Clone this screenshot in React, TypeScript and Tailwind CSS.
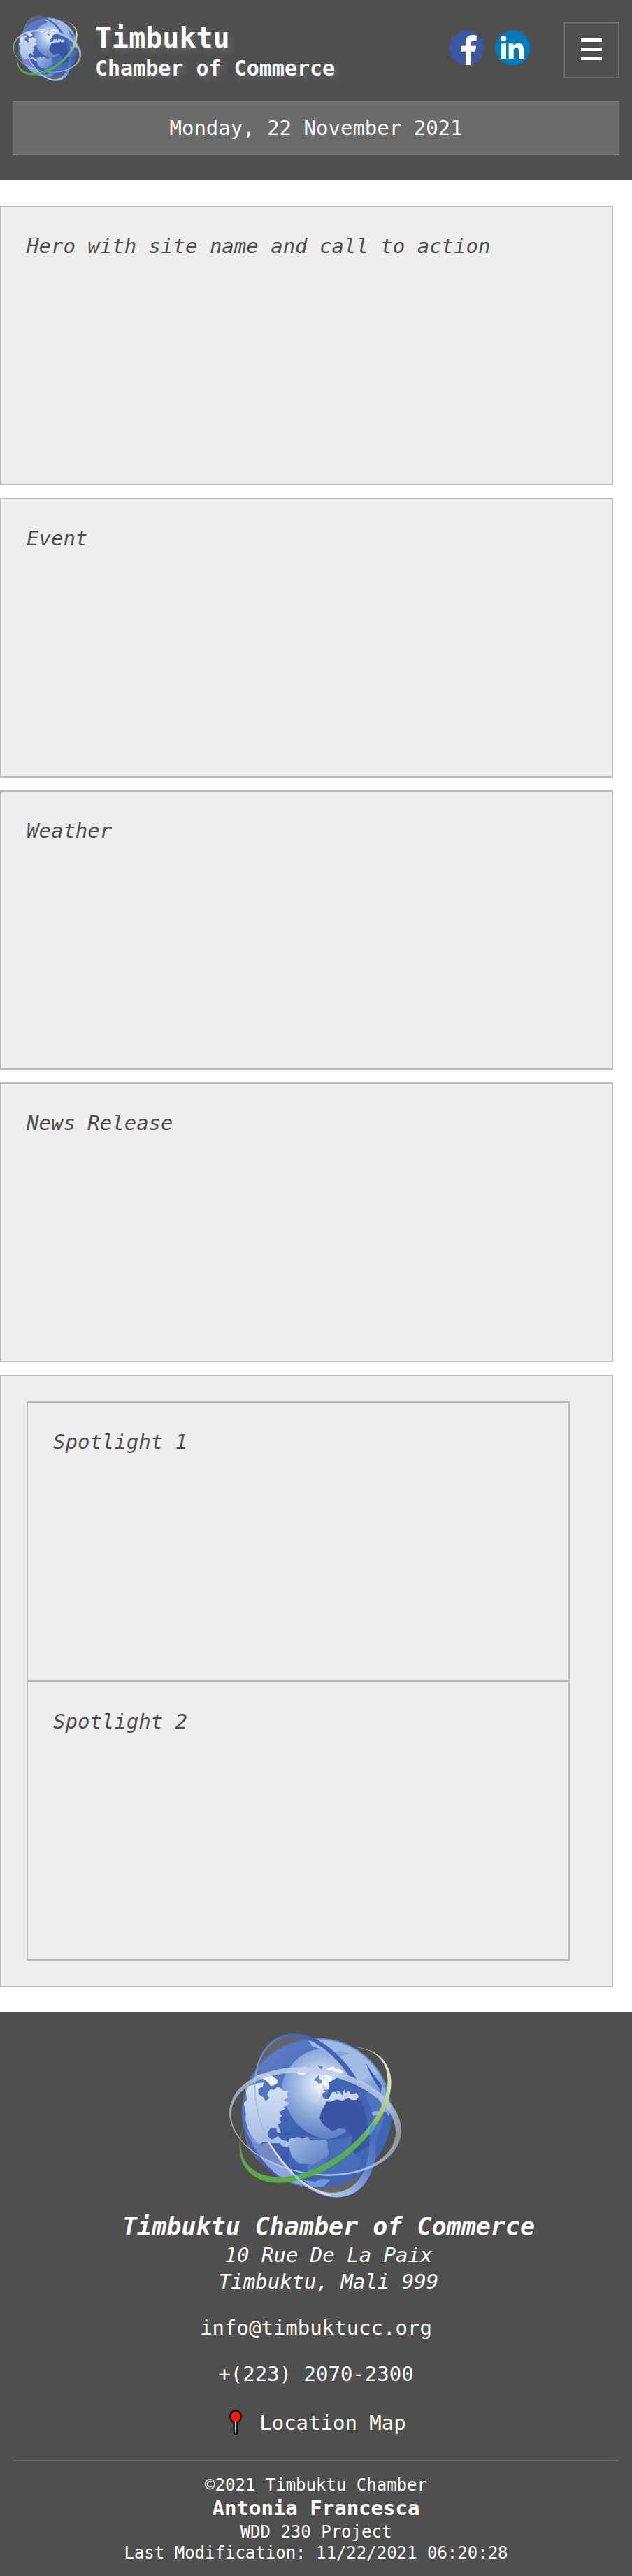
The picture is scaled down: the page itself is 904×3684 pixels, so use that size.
import { useId, useState } from "react";

function Globe({ className }: { className: string }) {
  const id = useId().replace(/[^a-zA-Z0-9]/g, "");
  const ref = (name: string) => `url(#${id}${name})`;
  return (
    <svg className={className} viewBox="78 48 756 756" role="img" aria-label="Globe logo">
      <defs>
        <linearGradient id={`${id}base`} x1="200" y1="130" x2="700" y2="700" gradientUnits="userSpaceOnUse">
          <stop offset="0" stopColor="#6482c8" />
          <stop offset="0.35" stopColor="#4a6cbc" />
          <stop offset="0.6" stopColor="#3b5aab" />
          <stop offset="1" stopColor="#4468b8" />
        </linearGradient>
        <radialGradient id={`${id}glow`} cx="480" cy="300" r="225" gradientUnits="userSpaceOnUse">
          <stop offset="0" stopColor="#ffffff" />
          <stop offset="0.2" stopColor="#d5e0f3" />
          <stop offset="0.5" stopColor="#9db8e2" />
          <stop offset="1" stopColor="#7394d2" stopOpacity="0.7" />
        </radialGradient>
        <linearGradient id={`${id}asia`} x1="560" y1="120" x2="720" y2="370" gradientUnits="userSpaceOnUse">
          <stop offset="0" stopColor="#9db9e4" />
          <stop offset="0.6" stopColor="#a3bde3" />
          <stop offset="1" stopColor="#5f86ca" />
        </linearGradient>
        <linearGradient id={`${id}america`} x1="250" y1="270" x2="240" y2="560" gradientUnits="userSpaceOnUse">
          <stop offset="0" stopColor="#dbe7f7" />
          <stop offset="1" stopColor="#a5bbe2" />
        </linearGradient>
        <linearGradient id={`${id}south`} x1="370" y1="530" x2="500" y2="680" gradientUnits="userSpaceOnUse">
          <stop offset="0" stopColor="#9ab4e0" />
          <stop offset="1" stopColor="#5579c2" />
        </linearGradient>
        <linearGradient id={`${id}ringA`} x1="90" y1="400" x2="822" y2="490" gradientUnits="userSpaceOnUse">
          <stop offset="0" stopColor="#a8b6bc" />
          <stop offset="0.25" stopColor="#c0d4ee" />
          <stop offset="0.6" stopColor="#bccdec" />
          <stop offset="0.88" stopColor="#b4c5e4" />
          <stop offset="1" stopColor="#98a5ab" />
        </linearGradient>
        <linearGradient id={`${id}ringB`} x1="180" y1="650" x2="770" y2="230" gradientUnits="userSpaceOnUse">
          <stop offset="0" stopColor="#5ba745" />
          <stop offset="0.4" stopColor="#58b058" />
          <stop offset="0.58" stopColor="#a0c257" />
          <stop offset="0.78" stopColor="#dbe4b4" />
          <stop offset="1" stopColor="#e0e1d4" />
        </linearGradient>
        <linearGradient id={`${id}ringC`} x1="350" y1="85" x2="560" y2="787" gradientUnits="userSpaceOnUse">
          <stop offset="0" stopColor="#3f5dad" />
          <stop offset="0.28" stopColor="#4764b5" />
          <stop offset="0.48" stopColor="#5f85cd" />
          <stop offset="0.65" stopColor="#9fb8e6" />
          <stop offset="0.9" stopColor="#a9bbe0" />
          <stop offset="1" stopColor="#dfe2ea" />
        </linearGradient>
        <clipPath id={`${id}ball`}>
          <circle cx="459" cy="425" r="322" />
        </clipPath>
        <mask id={`${id}maskA`}>
          <rect x="0" y="0" width="900" height="900" fill="#fff" />
          <ellipse cx="445" cy="470" rx="356" ry="213" transform="rotate(9.4 445 470)" fill="#000" />
        </mask>
        <mask id={`${id}maskB`}>
          <rect x="0" y="0" width="900" height="900" fill="#fff" />
          <ellipse cx="448" cy="421" rx="364" ry="212" transform="rotate(-37.8 448 421)" fill="#000" />
        </mask>
        <mask id={`${id}maskC`}>
          <rect x="0" y="0" width="900" height="900" fill="#fff" />
          <ellipse cx="441" cy="433" rx="353" ry="217" transform="rotate(66 441 433)" fill="#000" />
        </mask>
      </defs>

      <ellipse cx="453" cy="436" rx="370" ry="229" transform="rotate(65.1 453 436)" fill="#fff" opacity="0.12" />
      <path d="M150 500Q150 620 310 696Q230 640 150 500Z" fill="#fff" opacity="0.22" />

      <circle cx="459" cy="425" r="322" fill={ref("base")} />
      <g clipPath={ref("ball")}>
        <path d="M338 238Q390 150 500 150L600 180L680 280L650 360Q640 520 500 538Q340 510 310 320Q312 270 338 238Z" fill={ref("glow")} />
        <path d="M420 108Q560 90 680 180Q780 280 790 400L755 370L742 320L733 300Q700 260 670 210Q690 270 728 320L745 375L700 360L630 300L600 270L575 250L530 200L500 160L440 140Z" fill={ref("asia")} />
        <path d="M540 165L560 158L600 170L560 182L540 200Z" fill="#86a5da" />
        <path d="M440 108Q560 105 640 150Q735 215 770 330" fill="none" stroke="#8fafe0" strokeWidth="10" opacity="0.6" />

        <path d="M510 295L545 275L600 268L690 320L745 380L770 430L765 550Q730 650 650 700Q560 740 470 715L420 680L340 650L340 560L390 530L440 535Q560 550 610 520L600 500L550 490L472 450L500 380L485 345L510 325Z" fill="#3f66b5" />
        <path d="M510 374Q474 410 472 450Q485 485 530 503Q565 485 583 492Q588 512 611 522Q615 560 590 580Q608 590 622 603L690 560Q705 440 652 372L600 366L545 362Z" fill="#3a55a7" />
        <path d="M370 515Q440 545 500 539Q570 545 611 524Q610 560 590 577Q620 590 630 610Q658 630 646 650Q600 700 495 700L500 540Z" fill="#486eb9" />
        <path d="M648 372Q705 430 695 560L740 490L755 380L690 320Z" fill="#5279bf" opacity="0.7" />
        <path d="M740 308L752 320L758 350L778 390L770 440L740 400L728 360Z" fill="#95b5e5" opacity="0.8" />
        <path d="M694 425Q710 412 730 420L750 405L760 420Q735 420 720 432L703 438Z" fill="#8bb0e5" />

        <path d="M462 220L486 225L485 240L494 247L506 233L530 225L540 238L558 235L576 252L552 260L545 270L527 268L522 290L512 292L505 275L490 262L474 242Z" fill="#f4f8fe" />
        <path d="M462 220L486 225L483 238L490 246L476 242ZM458 272L468 262L470 278L480 284L481 298L465 299L462 290L446 286Z" fill="#6889c9" />
        <path d="M485 300L482 320L497 333L483 342L485 366L510 365L520 345L526 336L540 335L550 346L545 330L560 335L568 350L577 324L584 340L597 331L605 344L630 340L640 354L628 370L607 369L595 360L570 372L545 367L515 377L490 374L500 355L511 334L503 320Z" fill="#c9d9f1" />
        <path d="M485 328L511 325L522 330L516 350L488 366L482 343L498 334Z" fill="#3c61b0" opacity="0.85" />
        <path d="M370 252Q382 232 410 227L427 238Q418 256 395 264Q382 262 370 252Z" fill="#f1f6fe" />

        <path d="M198 270Q215 255 255 258L290 282L292 296L278 305L262 310L249 292L230 280Z" fill="#eef5fe" />
        <path d="M152 315L178 306L206 298L232 294L228 312L208 322L210 346L230 358L240 374L256 362L246 344L260 324L276 326L292 312L307 320L315 330L337 332L330 345L337 357L317 372L341 382L328 397L314 399L325 406L298 422L310 437L298 451L307 466L292 475L299 493L306 512L290 510L286 491L262 490L250 508L252 526L264 540L280 533L292 525L300 532L310 541L327 545L340 551L338 571L314 569L298 555L270 556L252 550L232 549L212 560L188 547L178 528L163 493L154 456L155 428L145 382L160 370Z" fill={ref("america")} />
        <path d="M302 515L325 512L346 516L330 521ZM321 457L331 447L336 459L326 464Z" fill="#3857ab" />
        <path d="M337 545Q342 530 365 534L375 528Q388 528 397 537Q415 524 425 531L430 544L460 543Q475 545 482 539L500 540Q508 555 505 576Q516 592 506 607L495 632L475 642L445 648L420 680L420 645L384 643Q350 620 345 590Z" fill={ref("south")} />
        <path d="M420 645L445 648L500 610L495 680L470 690L415 690Z" fill="#5277c1" />
        <path d="M152 490Q200 620 300 700Q350 740 420 745L370 700Q290 620 254 552L212 560Z" fill="#8492ca" opacity="0.8" />
        <path d="M215 610L330 660L400 740Q280 710 215 610Z" fill="#8fa8dc" />
        <path d="M400 712L450 720L480 708L520 710L490 740L440 745Z" fill="#6f98d7" />
      </g>
      <circle cx="459" cy="425" r="319" fill="none" stroke="#3f62b6" strokeWidth="5" opacity="0.6" />

      <g mask={ref("maskC")}>
        <ellipse cx="453" cy="436" rx="372" ry="231" transform="rotate(65.1 453 436)" fill={ref("ringC")} />
      </g>
      <path d="M254 552Q310 640 366 694Q430 755 520 779" fill="none" stroke="#d9dff2" strokeWidth="7" />
      <g mask={ref("maskA")} opacity="0.85">
        <ellipse cx="453" cy="462" rx="372" ry="228" transform="rotate(9.4 453 462)" fill={ref("ringA")} />
      </g>
      <g mask={ref("maskB")}>
        <ellipse cx="453" cy="434" rx="376" ry="222" transform="rotate(-38.3 453 434)" fill={ref("ringB")} />
      </g>
      <path d="M684 498L707 463L708 494L686 522Z" fill="#4a9ddb" />
      <path d="M360 694L372 690L392 715L380 717Z" fill="#7cc5dd" />
    </svg>
  );
}

function FacebookIcon() {
  return (
    <svg className="size-[50px]" viewBox="0 0 150 150" aria-hidden="true">
      <circle cx="75" cy="75" r="75" fill="#3b579d" />
      <path d="M72 150V92H51V68H72V54C72 31 83 21 103 21Q112 21 119 23V45H107C98 45 96 49 96 57V68H117L114 92H96V150Z" fill="#fff" />
    </svg>
  );
}

function LinkedInIcon() {
  return (
    <svg className="size-[50px]" viewBox="0 0 150 150" aria-hidden="true">
      <circle cx="75" cy="75" r="75" fill="#007ab9" />
      <circle cx="37" cy="37" r="12" fill="#fff" />
      <path d="M27 58H48V123H27ZM59 58H79V67C84 60 91 56 101 56C118 56 123 68 123 86V123H102V90C102 80 100 75 92 75C83 75 80 81 80 90V123H59Z" fill="#fff" />
    </svg>
  );
}

function PinIcon() {
  return (
    <svg className="h-[38px] w-11 shrink-0" viewBox="0 0 44 38" aria-hidden="true">
      <path d="M18.5 17V32.5A3.5 3.5 0 1 0 25.5 32.5V17Z" fill="#000" />
      <ellipse cx="22" cy="10" rx="9" ry="9.8" fill="#000" />
      <ellipse cx="22" cy="10" rx="6.8" ry="7.4" fill="#ff1800" />
      <path d="M20.8 17H23.2V32.5H20.8Z" fill="#c8c8c8" />
      <circle cx="22" cy="33.5" r="1.2" fill="#777" />
    </svg>
  );
}

const cardClass =
  "min-h-[400px] w-[97%] border-2 border-[#bababa] bg-[#eeeeee] p-9 text-[29px] leading-10 italic text-[#4f4f4f]";

export default function App() {
  const [open, setOpen] = useState(false);

  return (
    <div className="bg-white font-['DejaVu_Sans_Mono',monospace] text-[29px] text-white">
      <header className="bg-[#4f4f4f] px-[18px] pt-[18px] pb-9">
        <div className="flex items-center">
          <Globe className="size-[100px] shrink-0" />
          <div className="pt-3 pl-[18px] font-bold [text-shadow:4px_4px_10px_#6b6b6b]">
            <h1 className="text-[40px] leading-12">Timbuktu</h1>
            <p className="text-[30px] leading-10">Chamber of Commerce</p>
          </div>
          <div className="ml-auto flex gap-4">
            <a href="#facebook" aria-label="Facebook">
              <FacebookIcon />
            </a>
            <a href="#linkedin" aria-label="LinkedIn">
              <LinkedInIcon />
            </a>
          </div>
          <button
            type="button"
            aria-label="Menu"
            aria-expanded={open}
            onClick={() => setOpen(!open)}
            className="mt-2 ml-12 flex size-20 shrink-0 flex-col items-center justify-center gap-2 border-2 border-[#6b6b6b] pb-[3px]"
          >
            <span className="h-[5px] w-[30px] bg-white" />
            <span className="h-[5px] w-[30px] bg-white" />
            <span className="h-[5px] w-[30px] bg-white" />
          </button>
        </div>
        <p className="mt-[26px] border-y-2 border-[#7d7d7d] bg-[#6b6b6b] py-[17px] text-center leading-10">
          Monday, 22 November 2021
        </p>
      </header>

      <main className="flex flex-col gap-[18px] py-9">
        <section className={cardClass}>Hero with site name and call to action</section>
        <section className={cardClass}>Event</section>
        <section className={cardClass}>Weather</section>
        <section className={cardClass}>News Release</section>
        <section className="w-[97%] border-2 border-[#bababa] bg-[#eeeeee] p-9">
          <div className={cardClass}>Spotlight 1</div>
          <div className={cardClass}>Spotlight 2</div>
        </section>
      </main>

      <footer className="flex flex-col bg-[#4f4f4f] px-[18px] py-[18px] text-center">
        <Globe className="size-[252px] self-center" />
        <address className="mt-[14px] pl-9 leading-[38px]">
          <h2 className="text-[35px] leading-[44px] font-bold">Timbuktu Chamber of Commerce</h2>
          <p>10 Rue De La Paix</p>
          <p>Timbuktu, Mali 999</p>
        </address>
        <a href="mailto:info@timbuktucc.org" className="mt-7 self-center leading-[38px]">
          info@timbuktucc.org
        </a>
        <a href="tel:+22320702300" className="mt-7 self-center leading-[38px]">
          +(223) 2070-2300
        </a>
        <a href="#map" className="mt-8 flex items-center gap-3 self-center pr-2 leading-[38px]">
          <PinIcon />
          Location Map
        </a>
        <hr className="mt-[34px] border-t-2 border-[#6b6b6b]" />
        <div className="mt-[19px] text-2xl leading-[30px]">
          <p>©2021 Timbuktu Chamber</p>
          <p className="text-[29px] leading-[37px] font-bold">Antonia Francesca</p>
          <p>WDD 230 Project</p>
          <p>Last Modification: 11/22/2021 06:20:28</p>
        </div>
      </footer>
    </div>
  );
}
